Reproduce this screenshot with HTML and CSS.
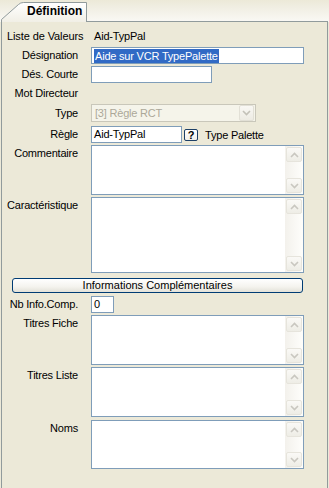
FILE: index.html
```html
<!DOCTYPE html>
<html lang="fr">
<head>
<meta charset="utf-8">
<title>Définition</title>
<link rel="stylesheet" href="styles.css">
</head>
<body>
<div class="window">
  <div class="tabstrip">
    <div class="tab">
      <svg class="tab-shape" width="88" height="22" viewBox="0 0 88 22">
        <defs>
          <linearGradient id="tg" x1="0" y1="0" x2="0" y2="1">
            <stop offset="0" stop-color="#FFFFFF"/>
            <stop offset="1" stop-color="#F1EFE6"/>
          </linearGradient>
        </defs>
        <path d="M1.5 22 L1.5 19.5 L18.5 4.5 Q20.5 2.5 23.5 2.5 L86.5 2.5 L86.5 22 Z" fill="url(#tg)" stroke="none"/>
        <path d="M1.5 22 L1.5 19.5 L18.5 4.5 Q20.5 2.5 23.5 2.5 L86.5 2.5 L86.5 22" fill="none" stroke="#919B9C"/>
      </svg>
      <span class="tab-label">Définition</span>
    </div>
    <div class="strip-rest"></div>
  </div>

  <div class="panel">
    <div class="row row-first">
      <div class="lbl lbl-wide">Liste de Valeurs</div>
      <div class="value">Aid-TypPal</div>
    </div>

    <div class="row">
      <div class="lbl">Désignation</div>
      <div class="edit edit-wide"><span class="sel">Aide sur VCR TypePalette</span></div>
    </div>

    <div class="row">
      <div class="lbl">Dés. Courte</div>
      <div class="edit edit-short"></div>
    </div>

    <div class="row row-plain">
      <div class="lbl">Mot Directeur</div>
      <div></div>
    </div>

    <div class="row">
      <div class="lbl">Type</div>
      <div class="combo">
        <span class="combo-text">[3] Règle RCT</span>
        <span class="combo-btn">
          <svg width="9" height="6" viewBox="0 0 9 6"><path d="M1 1 L4.5 4.5 L8 1" fill="none" stroke="#C3C1B8" stroke-width="1.6"/></svg>
        </span>
      </div>
    </div>

    <div class="row row-gap4">
      <div class="lbl">Règle</div>
      <div class="field-line">
        <div class="edit edit-rule">Aid-TypPal</div>
        <div class="qbtn">?</div>
        <span class="rule-text">Type Palette</span>
      </div>
    </div>

    <div class="row">
      <div class="lbl lbl-top">Commentaire</div>
      <div class="memo memo-50">
        <div class="memo-text"></div>
        <div class="vscroll">
          <div class="sbtn"><svg width="9" height="6" viewBox="0 0 9 6"><path d="M1 5 L4.5 1.5 L8 5" fill="none" stroke="#C9C7C0" stroke-width="1.6"/></svg></div>
          <div class="track"></div>
          <div class="sbtn"><svg width="9" height="6" viewBox="0 0 9 6"><path d="M1 1 L4.5 4.5 L8 1" fill="none" stroke="#C9C7C0" stroke-width="1.6"/></svg></div>
        </div>
      </div>
    </div>

    <div class="row">
      <div class="lbl lbl-top">Caractéristique</div>
      <div class="memo memo-76">
        <div class="memo-text"></div>
        <div class="vscroll">
          <div class="sbtn"><svg width="9" height="6" viewBox="0 0 9 6"><path d="M1 5 L4.5 1.5 L8 5" fill="none" stroke="#C9C7C0" stroke-width="1.6"/></svg></div>
          <div class="track"></div>
          <div class="sbtn"><svg width="9" height="6" viewBox="0 0 9 6"><path d="M1 1 L4.5 4.5 L8 1" fill="none" stroke="#C9C7C0" stroke-width="1.6"/></svg></div>
        </div>
      </div>
    </div>

    <div class="btn-row">
      <div class="xpbtn">Informations Complémentaires</div>
    </div>

    <div class="row row-gap3">
      <div class="lbl">Nb Info.Comp.</div>
      <div class="edit edit-num">0</div>
    </div>

    <div class="row">
      <div class="lbl lbl-top">Titres Fiche</div>
      <div class="memo memo-50">
        <div class="memo-text"></div>
        <div class="vscroll">
          <div class="sbtn"><svg width="9" height="6" viewBox="0 0 9 6"><path d="M1 5 L4.5 1.5 L8 5" fill="none" stroke="#C9C7C0" stroke-width="1.6"/></svg></div>
          <div class="track"></div>
          <div class="sbtn"><svg width="9" height="6" viewBox="0 0 9 6"><path d="M1 1 L4.5 4.5 L8 1" fill="none" stroke="#C9C7C0" stroke-width="1.6"/></svg></div>
        </div>
      </div>
    </div>

    <div class="row">
      <div class="lbl lbl-top">Titres Liste</div>
      <div class="memo memo-50">
        <div class="memo-text"></div>
        <div class="vscroll">
          <div class="sbtn"><svg width="9" height="6" viewBox="0 0 9 6"><path d="M1 5 L4.5 1.5 L8 5" fill="none" stroke="#C9C7C0" stroke-width="1.6"/></svg></div>
          <div class="track"></div>
          <div class="sbtn"><svg width="9" height="6" viewBox="0 0 9 6"><path d="M1 1 L4.5 4.5 L8 1" fill="none" stroke="#C9C7C0" stroke-width="1.6"/></svg></div>
        </div>
      </div>
    </div>

    <div class="row row-gap3">
      <div class="lbl lbl-top">Noms</div>
      <div class="memo memo-49">
        <div class="memo-text"></div>
        <div class="vscroll">
          <div class="sbtn"><svg width="9" height="6" viewBox="0 0 9 6"><path d="M1 5 L4.5 1.5 L8 5" fill="none" stroke="#C9C7C0" stroke-width="1.6"/></svg></div>
          <div class="track"></div>
          <div class="sbtn"><svg width="9" height="6" viewBox="0 0 9 6"><path d="M1 1 L4.5 4.5 L8 1" fill="none" stroke="#C9C7C0" stroke-width="1.6"/></svg></div>
        </div>
      </div>
    </div>
  </div>
</div>
</body>
</html>
```

FILE: styles.css
```css
* { box-sizing: border-box; }

html, body {
  margin: 0;
  padding: 0;
  background: #ECE9D8;
}

body {
  width: 329px;
  height: 488px;
  overflow: hidden;
  font-family: "Liberation Sans", Arial, sans-serif;
  font-size: 11px;
  letter-spacing: -0.2px;
  color: #000;
}

.window {
  width: 329px;
  height: 488px;
  display: flex;
  flex-direction: column;
}

.tabstrip {
  display: flex;
  height: 22px;
  background: linear-gradient(#ECE9D8 0%, #F2F0E6 45%, #FAF9F5 100%);
  flex: none;
}

.tab {
  position: relative;
  width: 87px;
  height: 22px;
  flex: none;
}

.tab-shape {
  position: absolute;
  left: 0;
  top: 0;
}

.tab-label {
  position: relative;
  display: block;
  padding-left: 27px;
  padding-top: 5px;
  line-height: 13px;
  font-size: 12px;
  font-weight: bold;
  letter-spacing: 0;
}

.strip-rest {
  flex: 1;
  margin-right: 1px;
  border-bottom: 1px solid #919B9C;
  border-right: 1px solid #919B9C;
  margin-top: 21px;
  height: 1px;
}

.panel {
  flex: 1;
  margin-left: 1px;
  margin-right: 1px;
  border-left: 1px solid #919B9C;
  border-right: 1px solid #919B9C;
  padding: 6px 0 0 0;
  display: flex;
  flex-direction: column;
  gap: 2px;
}

.row {
  display: grid;
  grid-template-columns: 76px 213px;
  column-gap: 13px;
  min-height: 17px;
}

.row-first { height: 15px; }
.row-plain { height: 17px; }
.row-gap4 { margin-top: 2px; }
.row-gap3 { margin-top: 1px; }

.lbl {
  text-align: right;
  white-space: nowrap;
  align-self: center;
  line-height: 13px;
}

.lbl-wide {
  text-align: left;
  padding-left: 5px;
  overflow: visible;
  letter-spacing: -0.1px;
}

.lbl-top {
  align-self: start;
  padding-top: 2px;
}

.value {
  align-self: center;
  padding-left: 3px;
  line-height: 13px;
  white-space: nowrap;
}

.edit {
  height: 17px;
  border: 1px solid #7F9DB9;
  background: #FFFFFF;
  padding: 1px 2px 0 2px;
  line-height: 13px;
  white-space: nowrap;
  overflow: hidden;
}

.edit-wide { width: 213px; }
.edit-short { width: 121px; }
.edit-rule { width: 91px; }
.edit-num { width: 23px; }

.sel {
  display: inline-block;
  background: #316AC5;
  color: #FFFFFF;
  padding: 0 1px;
  line-height: 14px;
}

.combo {
  width: 165px;
  height: 18px;
  border: 1px solid #C9C7BA;
  background: #F5F4EA;
  display: flex;
  align-items: center;
  padding: 1px;
}

.combo-text {
  flex: 1;
  color: #ACA899;
  padding-left: 2px;
  white-space: nowrap;
}

.combo-btn {
  width: 15px;
  height: 16px;
  border: 1px solid #E2E0D6;
  border-radius: 2px;
  background: linear-gradient(#F9F8F4, #EDEBE3);
  display: flex;
  align-items: center;
  justify-content: center;
}

.field-line {
  display: flex;
  align-items: center;
}

.qbtn {
  margin-left: 2px;
  width: 14px;
  height: 12px;
  border: 1px solid #1C3F66;
  border-radius: 2px;
  background: linear-gradient(#FFFFFF, #F0EFEA);
  font-weight: bold;
  font-size: 11px;
  line-height: 10px;
  text-align: center;
  letter-spacing: 0;
}

.rule-text {
  margin-left: 7px;
  white-space: nowrap;
}

.memo {
  width: 213px;
  border: 1px solid #7F9DB9;
  background: #FFFFFF;
  display: flex;
}

.memo-50 { height: 50px; }
.memo-76 { height: 76px; }
.memo-49 { height: 49px; }

.memo-text { flex: 1; }

.vscroll {
  width: 18px;
  padding: 1px;
  display: flex;
  flex-direction: column;
  background: linear-gradient(to right, #F3F1EC, #FEFEFB);
}

.sbtn {
  height: 15px;
  flex: none;
  border: 1px solid #E6E4DC;
  border-radius: 2px;
  background: linear-gradient(#FAF9F6, #EEEDE6);
  display: flex;
  align-items: center;
  justify-content: center;
}

.track { flex: 1; }

.btn-row {
  margin-top: 3px;
  padding-left: 10px;
}

.xpbtn {
  width: 291px;
  height: 15px;
  border: 1px solid #003C74;
  border-radius: 3px;
  background: linear-gradient(#FFFFFF, #F4F3EE 60%, #E3E1D8);
  text-align: center;
  line-height: 13px;
  white-space: nowrap;
  letter-spacing: 0;
}
```
